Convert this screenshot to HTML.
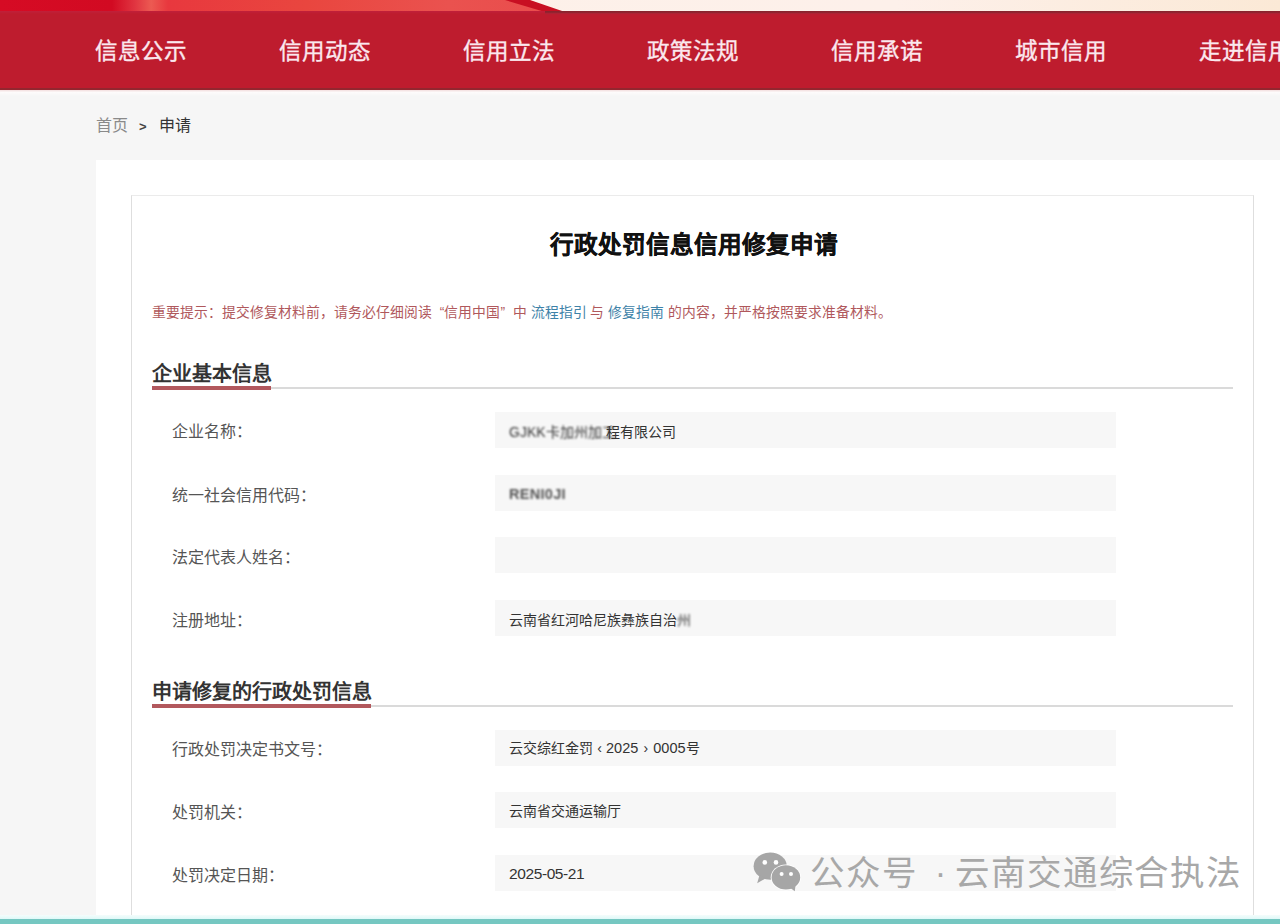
<!DOCTYPE html>
<html lang="zh-CN">
<head>
<meta charset="utf-8">
<style>
html,body{margin:0;padding:0;}
body{width:1280px;height:924px;overflow:hidden;position:relative;background:#f6f6f6;font-family:"Liberation Sans",sans-serif;}
.abs{position:absolute;white-space:nowrap;}
#topstrip{position:absolute;left:0;top:0;width:1280px;height:12px;}
#nav{position:absolute;left:0;top:11px;width:1280px;height:78px;background:#be1c2e;}
#navtop{position:absolute;left:545px;top:11px;width:735px;height:5px;background:linear-gradient(#8a232d 0px,#8a232d 1.2px,#a82535 2.2px,#bb1d30 3.5px,#be1c2e 5px);}
#navtopl{position:absolute;left:0;top:11px;width:545px;height:3px;background:linear-gradient(#c0203a,#be1c2e);}
#navline{position:absolute;left:0;top:88px;width:1280px;height:2px;background:#93262f;}
#navfade{position:absolute;left:0;top:90px;width:1280px;height:6px;background:linear-gradient(#f3dede,#fdfbfb 40%,#f6f6f6);}
.nav-item{position:absolute;white-space:nowrap;top:27px;font-size:22.5px;-webkit-text-stroke:0.35px #fbe8ee;line-height:28px;color:#fbe8ee;}
#crumb{left:96px;top:116px;font-size:16px;line-height:20px;}
#white{position:absolute;left:96px;top:160px;width:1184px;height:770px;background:#fff;}
#box{position:absolute;left:131px;top:195px;width:1121px;height:740px;border:1px solid #dedede;border-top-color:#ebebeb;border-bottom:none;background:#fff;}
#title{left:2px;width:1384px;text-align:center;top:229.5px;font-size:23.6px;letter-spacing:0px;line-height:30px;font-weight:bold;color:#111;-webkit-text-stroke:0.3px #111;}
#notice{left:152px;top:303.5px;font-size:13.8px;line-height:18px;color:#b0585c;}
#notice .b{color:#3d82a8;}
#notice .q{display:inline-block;width:12.4px;}
.sec{position:absolute;font-size:20px;line-height:24px;font-weight:bold;color:#333;left:152px;}
.secline{position:absolute;left:152px;width:1081px;height:2px;background:#dadada;}
.secbar{position:absolute;left:152px;height:4px;background:#b2585d;}
.lbl{position:absolute;white-space:nowrap;left:172px;font-size:16px;line-height:20px;color:#555;}
.inp{position:absolute;left:495px;width:621px;height:36px;background:#f7f7f7;}
.val{position:absolute;white-space:nowrap;left:509px;font-size:14px;line-height:18px;color:#333;}
.br{display:inline-block;text-align:center;}
.dg{font-size:15.5px;letter-spacing:-0.4px;}
.blur{display:inline-block;filter:blur(0.8px);color:#333;}
#wm{left:810px;top:851px;font-size:34.5px;line-height:44px;color:#a8a8a8;letter-spacing:1.8px;word-spacing:1px;}
</style>
</head>
<body>
<svg id="topstrip" width="1280" height="12" viewBox="0 0 1280 12">
  <defs>
    <linearGradient id="tg" gradientUnits="userSpaceOnUse" x1="0" x2="560" y1="0" y2="0">
      <stop offset="0" stop-color="#d60b24"/>
      <stop offset="0.2" stop-color="#d20a22"/>
      <stop offset="0.24" stop-color="#e03440"/>
      <stop offset="0.27" stop-color="#ec5a52"/>
      <stop offset="0.3" stop-color="#e8383e"/>
      <stop offset="0.55" stop-color="#e9463f"/>
      <stop offset="0.8" stop-color="#ea524f"/>
      <stop offset="1" stop-color="#e94c4c"/>
    </linearGradient>
    <linearGradient id="cg" x1="0" x2="1" y1="0" y2="0">
      <stop offset="0" stop-color="#fdf1e8"/>
      <stop offset="0.7" stop-color="#fdf0ea"/>
      <stop offset="1" stop-color="#fbe9d6"/>
    </linearGradient>
  </defs>
  <rect x="0" y="0" width="1280" height="12" fill="url(#cg)"/>
  <polygon points="0,0 528,0 562,12 0,12" fill="url(#tg)"/>
  <polygon points="505,0 530,0 565,12 545,12" fill="#c80f22"/>
</svg>
<div id="nav">
  <div class="nav-item" style="left:96px;margin-left:-1px">信息公示</div>
  <div class="nav-item" style="left:280px;margin-left:-1px">信用动态</div>
  <div class="nav-item" style="left:464px;margin-left:-1px">信用立法</div>
  <div class="nav-item" style="left:648px;margin-left:-1px">政策法规</div>
  <div class="nav-item" style="left:832px;margin-left:-1px">信用承诺</div>
  <div class="nav-item" style="left:1016px;margin-left:-1px">城市信用</div>
  <div class="nav-item" style="left:1200px;margin-left:-1px">走进信用</div>
</div>
<div id="navtop"></div><div id="navtopl"></div>
<div id="navline"></div>
<div id="navfade"></div>
<div id="crumb" class="abs"><span style="color:#8a8a8a">首页</span><span style="color:#444;padding:0 12px 0 11px;font-size:13px;font-weight:bold;position:relative;top:0px">&gt;</span><span style="color:#333">申请</span></div>
<div id="white"></div>
<div id="box"></div>
<div id="title" class="abs">行政处罚信息信用修复申请</div>
<div id="notice" class="abs">重要提示：提交修复材料前，请务必仔细阅读<span class="q" style="text-align:right">“</span>信用中国<span class="q">”</span>中 <span class="b">流程指引</span> 与 <span class="b">修复指南</span> 的内容，并严格按照要求准备材料。</div>

<div class="sec" style="top:361.5px">企业基本信息</div>
<div class="secline" style="top:387px"></div>
<div class="secbar" style="top:386px;width:119px"></div>

<div class="inp" style="top:412px"></div>
<div class="inp" style="top:474.5px"></div>
<div class="inp" style="top:537px"></div>
<div class="inp" style="top:599.5px"></div>

<div class="lbl" style="top:422px">企业名称：</div>
<div class="val" style="top:422.5px"><span class="blur" style="display:inline-block;width:97px;overflow:visible">GJKK卡加州加工</span>程有限公司</div>

<div class="lbl" style="top:485.5px">统一社会信用代码：</div>
<div class="val" style="top:485px"><span class="blur" style="font-weight:bold;font-size:14.5px;letter-spacing:0.3px;color:#555">RENI0JI</span></div>

<div class="lbl" style="top:548px">法定代表人姓名：</div>

<div class="lbl" style="top:610.5px">注册地址：</div>
<div class="val" style="top:610.5px">云南省红河哈尼族彝族自治<span style="display:inline-block;filter:blur(0.8px);color:#444">州</span></div>

<div class="sec" style="top:679.5px">申请修复的行政处罚信息</div>
<div class="secline" style="top:705px"></div>
<div class="secbar" style="top:704px;width:219px"></div>

<div class="inp" style="top:729.5px"></div>
<div class="inp" style="top:792px"></div>
<div class="inp" style="top:854.5px"></div>

<div class="lbl" style="top:740px">行政处罚决定书文号：</div>
<div class="val" style="top:739px">云交综红金罚<span class="br" style="width:13px">‹</span><span style="font-size:14.5px">2025</span><span class="br" style="width:15px">›</span><span style="font-size:14.5px">0005</span>号</div>

<div class="lbl" style="top:803px">处罚机关：</div>
<div class="val" style="top:802px">云南省交通运输厅</div>

<div class="lbl" style="top:865.5px">处罚决定日期：</div>
<div class="val" style="top:864.5px"><span class="dg">2025-05-21</span></div>

<svg style="position:absolute;left:752px;top:851px" width="50" height="42" viewBox="0 0 50 42">
  <ellipse cx="18.2" cy="15.2" rx="16.6" ry="13.6" fill="#a6a6a6"/>
  <path d="M7.5 24 L5.2 32.2 L13.5 27.5 Z" fill="#a6a6a6"/>
  <circle cx="12.8" cy="11.4" r="2.3" fill="#fff"/>
  <circle cx="24" cy="11.4" r="2.3" fill="#fff"/>
  <ellipse cx="33.9" cy="26.4" rx="15.2" ry="13" fill="#fff"/>
  <ellipse cx="33.9" cy="26.4" rx="14.3" ry="12.1" fill="#a6a6a6"/>
  <path d="M38.5 37 L42.8 40.3 L43.5 34.5 Z" fill="#a6a6a6"/>
  <circle cx="29.6" cy="23" r="2" fill="#fff"/>
  <circle cx="39" cy="23" r="2" fill="#fff"/>
</svg>
<div id="wm" class="abs">公众号 <span style="position:relative;left:5px">·</span> 云南交通综合执法</div>

<div style="position:absolute;left:0;top:915px;width:1280px;height:4px;background:linear-gradient(#f4fdfc,#dff8f8)"></div>
<div style="position:absolute;left:0;top:919px;width:1280px;height:5px;background:#75c7c1"></div>
</body>
</html>
